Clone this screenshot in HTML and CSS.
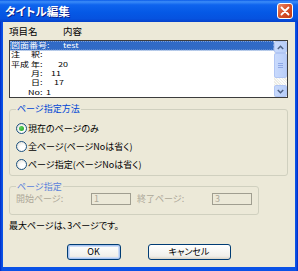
FILE: index.html
```html
<!DOCTYPE html>
<html lang="ja">
<head>
  <meta charset="UTF-8" />
  <title>タイトル編集</title>
  <link rel="stylesheet" href="styles.css">
</head>
<body>
  <div class="window">
    <div class="titlebar">
      <span class="title">タイトル編集</span>
      <span class="close">
        <svg width="10" height="10" viewBox="0 0 10 10"><path d="M1.5 1.5 L8.5 8.5 M8.5 1.5 L1.5 8.5" stroke="#fff" stroke-width="1.8" stroke-linecap="round"/></svg>
      </span>
    </div>
    <div class="client">
      <div class="cols"><span class="col-name">項目名</span><span>内容</span></div>
      <div class="listbox">
        <div class="items">
          <div class="item selected"><span>図面番号:</span><span class="val v-name">test</span></div>
          <div class="item"><span class="key spread"><span>注</span><span>釈</span></span>:</div>
          <div class="item"><span class="key spread"><span>平成</span><span>年</span></span>:<span class="val v-year">20</span></div>
          <div class="item"><span class="key">月</span>:<span class="val v-month">11</span></div>
          <div class="item"><span class="key">日</span>:<span class="val v-day">17</span></div>
          <div class="item"><span class="key">No</span>:<span class="val v-no">1</span></div>
        </div>
        <div class="scrollbar">
          <div class="sb-btn"><svg width="7" height="5" viewBox="0 0 7 5"><path d="M0.8 4 L3.5 1.3 L6.2 4" fill="none" stroke="#4d6185" stroke-width="1.5"/></svg></div>
          <div class="sb-thumb"><span></span><span></span><span></span></div>
          <div class="sb-track"></div>
          <div class="sb-btn"><svg width="7" height="5" viewBox="0 0 7 5"><path d="M0.8 1 L3.5 3.7 L6.2 1" fill="none" stroke="#4d6185" stroke-width="1.5"/></svg></div>
        </div>
      </div>

      <fieldset class="group">
        <legend>ページ指定方法</legend>
        <div class="radio-row"><span class="radio checked"></span>現在のページのみ</div>
        <div class="radio-row"><span class="radio"></span>全ページ(ページNoは省く)</div>
        <div class="radio-row"><span class="radio"></span>ページ指定(ページNoは省く)</div>
      </fieldset>

      <fieldset class="group group-range">
        <legend>ページ指定</legend>
        <div class="range-row">
          <span class="lbl">開始ページ:</span><span class="field">1</span>
          <span class="lbl lbl-end">終了ページ:</span><span class="field">3</span>
        </div>
      </fieldset>

      <p class="info">最大ページは、3ページです。</p>

      <div class="actions">
        <button class="btn btn-ok">OK</button>
        <button class="btn btn-cancel">キャンセル</button>
      </div>
    </div>
  </div>
</body>
</html>
```

FILE: styles.css
```css
* {
  margin: 0;
  padding: 0;
  box-sizing: border-box;
}
html, body {
  width: 298px;
  height: 271px;
  overflow: hidden;
  font-family: "Noto Sans CJK JP", "Noto Sans", sans-serif;
  font-size: 9px;
  font-feature-settings: "palt";
  color: #000;
}
.window {
  width: 298px;
  height: 271px;
  display: flex;
  flex-direction: column;
  background: linear-gradient(to right, #0029c4, #0a52e6 2px, #0a52e6 296px, #0029c4);
}
.titlebar {
  height: 22px;
  display: flex;
  align-items: center;
  justify-content: space-between;
  padding: 0 5px 0 5px;
  background: linear-gradient(to bottom, #0a5ae8 0%, #3b8cf8 8%, #0f64ee 22%, #0559e6 55%, #0652df 85%, #0541cb 100%);
}
.title {
  color: #fff;
  font-weight: bold;
  font-size: 11.5px;
  text-shadow: 1px 1px 0 #0a1e8a;
}
.close {
  width: 16px;
  height: 16px;
  display: flex;
  align-items: center;
  justify-content: center;
  border: 1px solid #fff;
  border-radius: 3px;
  background: linear-gradient(135deg, #ea8a6a, #d8532c 45%, #c23a12);
}
.client {
  flex: 1;
  margin: 0 3px 4px 3px;
  background: #ece9d8;
  padding: 3px 7px 0 6px;
}
.cols {
  display: flex;
  line-height: 12px;
  height: 12px;
  font-size: 9.5px;
}
.col-name {
  width: 54px;
}
.listbox {
  margin-top: 3px;
  height: 58px;
  display: flex;
  border: 1px solid #3c3c3c;
  background: #fff;
  overflow: hidden;
}
/* rows are drawn squat like the original list font */
.items {
  flex: 1;
  align-self: flex-start;
  font-size: 9px;
  transform: scaleY(0.717);
  transform-origin: top left;
}
.item {
  height: 13.1px;
  line-height: 13.1px;
  padding-left: 1px;
  display: flex;
  white-space: nowrap;
}
.item.selected {
  background: #316ac5;
  color: #fff;
  outline: 1px dotted #9fb6de;
  outline-offset: -1px;
}
.key {
  width: 29px;
  text-align: right;
}
.key.spread {
  display: flex;
  justify-content: space-between;
}
.val {
  margin-left: 3.5px;
}
.v-name {
  margin-left: 13.5px;
}
.v-year {
  margin-left: 15.5px;
}
.v-month {
  margin-left: 8.5px;
}
.v-day {
  margin-left: 11.5px;
}
.scrollbar {
  width: 13px;
  flex-shrink: 0;
  display: flex;
  flex-direction: column;
  background: #f4f3ee;
}
.sb-btn {
  height: 12px;
  display: flex;
  align-items: center;
  justify-content: center;
  background: linear-gradient(to right, #c8d9fb, #b7cdf8);
  border: 1px solid #b1c6f4;
  border-radius: 2px;
}
.sb-thumb {
  height: 25px;
  display: flex;
  flex-direction: column;
  align-items: center;
  justify-content: center;
  gap: 1px;
  background: linear-gradient(to right, #c9dafc, #b9cefa);
  border: 1px solid #b1c6f4;
  border-radius: 2px;
}
.sb-thumb span {
  width: 5px;
  height: 1px;
  background: #8ea8e6;
}
.sb-track {
  flex: 1;
  background: repeating-linear-gradient(45deg, #eeede5 0 1px, #fcfcfb 1px 2px);
}
.group {
  border: 1px solid #d0d0bf;
  border-radius: 3px;
  padding: 4px 6px 1px 6px;
  margin-top: 5px;
}
.group legend {
  color: #0046d5;
  line-height: 12px;
  padding: 0 1px;
}
.radio-row {
  height: 18.3px;
  display: flex;
  align-items: center;
}
.radio {
  width: 11px;
  height: 11px;
  margin-right: 1px;
  border: 1px solid #1c5180;
  border-radius: 50%;
  background: radial-gradient(circle at 65% 65%, #fff 30%, #dcdad0);
  display: flex;
  align-items: center;
  justify-content: center;
}
.radio.checked::after {
  content: "";
  width: 5px;
  height: 5px;
  border-radius: 50%;
  background: radial-gradient(circle at 35% 35%, #5ad05a, #21a121);
}
.group-range {
  width: 250px;
  padding: 0 6px 9px 6px;
}
.group-range legend {
  color: #5a82dc;
}
.range-row {
  display: flex;
  align-items: center;
  height: 12px;
  color: #aca899;
}
.lbl {
  width: 75px;
}
.lbl-end {
  margin-left: 6px;
}
.field {
  width: 40px;
  height: 12px;
  line-height: 10px;
  padding-left: 2px;
  border: 1px solid #a09e90;
  background: #ece9d8;
}
.info {
  margin-top: 5px;
  line-height: 12px;
}
.actions {
  margin-top: 12px;
  display: flex;
  justify-content: center;
  gap: 27px;
}
.btn {
  height: 16px;
  font-family: inherit;
  font-size: 9px;
  font-feature-settings: "palt";
  border: 1px solid #003c74;
  border-radius: 3px;
  background: linear-gradient(to bottom, #ffffff, #f0efea 80%, #d8d2c6);
  color: #000;
}
.btn-ok {
  width: 54px;
  box-shadow: inset 0 0 0 1px #a8c4f0, inset 0 0 0 2px #cddcf6;
}
.btn-cancel {
  width: 83px;
}
```
